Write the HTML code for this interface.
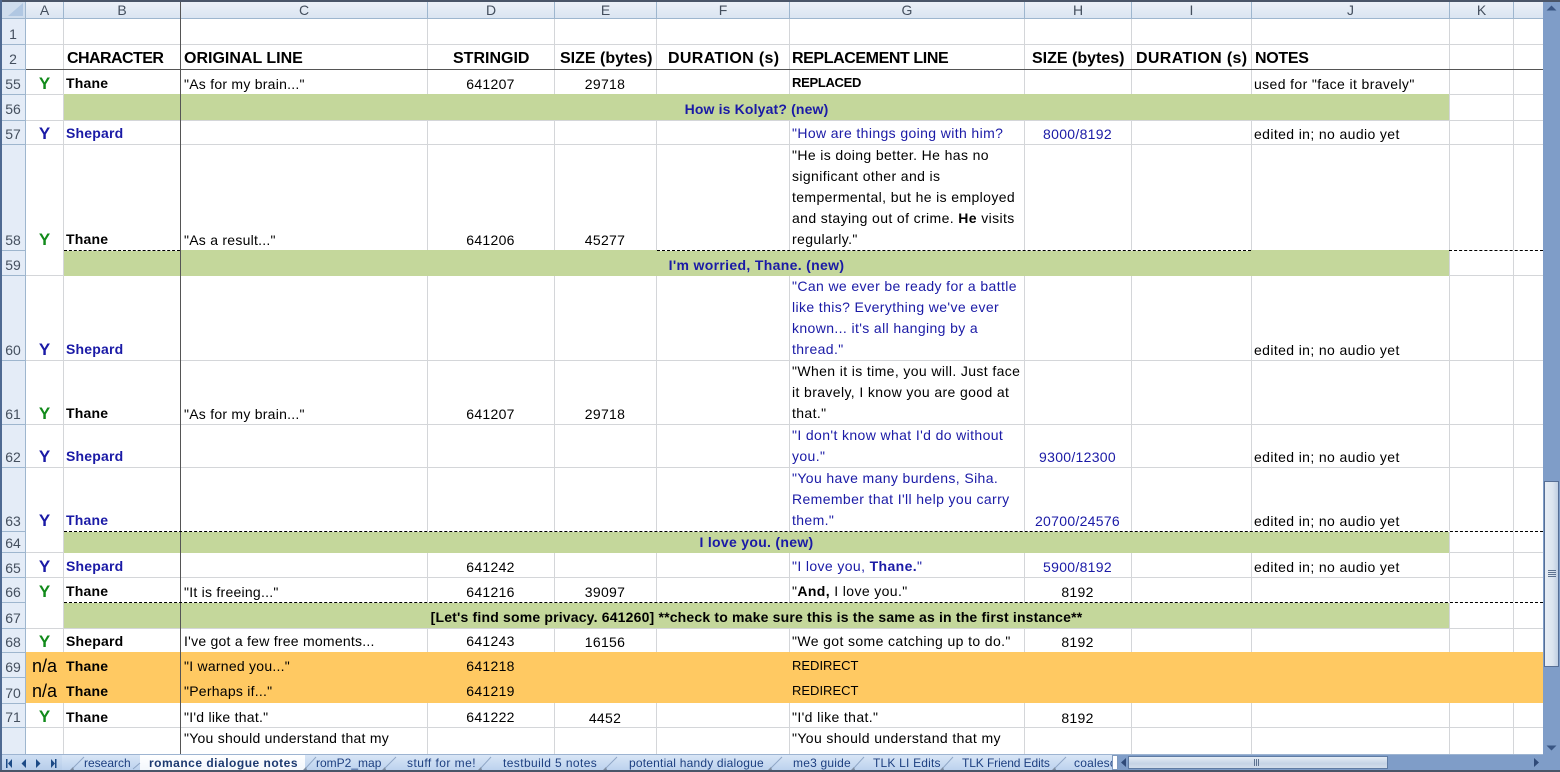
<!DOCTYPE html>
<html><head><meta charset="utf-8"><style>
html,body{margin:0;padding:0;background:#fff}
#w{position:relative;width:1560px;height:772px;overflow:hidden;background:#fff;font:14px/20px "Liberation Sans",sans-serif;color:#000}
#w div{position:absolute}
.t{white-space:nowrap;letter-spacing:.38px}
.g{left:792px}.c{left:184px;letter-spacing:.25px}.j{left:1254px}.b{left:66px;font-weight:bold;letter-spacing:.2px}
.d{left:427px;width:127px;text-align:center;letter-spacing:.3px}.e{left:554px;width:102px;text-align:center;letter-spacing:.3px}.h{left:1024px;width:107px;text-align:center;letter-spacing:.3px}
.bl{color:#1a1aa6}
.y{left:26px;width:37px;text-align:center;font-weight:bold;font-size:17px}
.gr{color:#118a1a}.yb{color:#1a1aa6}
.r{left:0;width:26px;text-align:center;color:#444f5e;font-size:14px}
.ch{top:0;height:19px;line-height:20px;text-align:center;color:#444f5e;font-size:14px}
.hd{top:49px;font-weight:bold;font-size:16px;white-space:nowrap}
.tab{top:754px;font-size:12px;color:#1d3f80;white-space:nowrap;line-height:18px;letter-spacing:.2px}
.v{top:19px;height:736px;width:1px;background:#d4d6d9}
.l{left:26px;width:1517px;height:1px;background:#d4d6d9}
.dash{height:0;border-top:1px dashed #000;background:#fff}
.grn{left:64px;width:1385px;background:#c4d79b}
.sec{left:64px;width:1385px;text-align:center;font-weight:bold}
.vh{top:2px;height:17px;width:1px;background:#9eb6ce}
.hh{left:0;width:26px;height:1px;background:#9eb6ce}
</style></head><body><div id="w">

<!-- header backgrounds -->
<div style="left:0;top:0;width:1543px;height:19px;background:linear-gradient(#eef2f8,#d9e4f1)"></div>
<div style="left:0;top:19px;width:26px;height:736px;background:#e4ecf7"></div>
<div style="left:0;top:18px;width:1543px;height:1px;background:#9eb6ce"></div>
<div style="left:25px;top:0;width:1px;height:755px;background:#9eb6ce"></div>
<div style="left:2px;top:2px;width:23px;height:16px;background:#cfdded"></div>
<div style="left:8px;top:3px;width:0;height:0;border-left:15px solid transparent;border-bottom:13px solid #b0c7e2"></div>

<!-- vertical grid -->
<div class="v" style="left:63px"></div><div class="v" style="left:427px"></div><div class="v" style="left:554px"></div><div class="v" style="left:656px"></div><div class="v" style="left:789px"></div><div class="v" style="left:1024px"></div><div class="v" style="left:1131px"></div><div class="v" style="left:1251px"></div><div class="v" style="left:1449px"></div><div class="v" style="left:1513px"></div>
<!-- horizontal grid -->
<div class="l" style="top:44px"></div><div class="l" style="top:94px"></div><div class="l" style="top:120px"></div><div class="l" style="top:144px"></div><div class="l" style="top:275px"></div><div class="l" style="top:360px"></div><div class="l" style="top:424px"></div><div class="l" style="top:467px"></div><div class="l" style="top:552px"></div><div class="l" style="top:577px"></div><div class="l" style="top:628px"></div><div class="l" style="top:727px"></div>

<!-- header separators -->
<div class="vh" style="left:63px"></div><div class="vh" style="left:427px"></div><div class="vh" style="left:554px"></div><div class="vh" style="left:656px"></div><div class="vh" style="left:789px"></div><div class="vh" style="left:1024px"></div><div class="vh" style="left:1131px"></div><div class="vh" style="left:1251px"></div><div class="vh" style="left:1449px"></div><div class="vh" style="left:1513px"></div>
<div class="hh" style="top:44px"></div><div class="hh" style="top:69px"></div><div class="hh" style="top:94px"></div><div class="hh" style="top:120px"></div><div class="hh" style="top:144px"></div><div class="hh" style="top:250px"></div><div class="hh" style="top:275px"></div><div class="hh" style="top:360px"></div><div class="hh" style="top:424px"></div><div class="hh" style="top:467px"></div><div class="hh" style="top:531px"></div><div class="hh" style="top:552px"></div><div class="hh" style="top:577px"></div><div class="hh" style="top:602px"></div><div class="hh" style="top:628px"></div><div class="hh" style="top:652px"></div><div class="hh" style="top:677px"></div><div class="hh" style="top:703px"></div><div class="hh" style="top:727px"></div>

<!-- fills -->
<div class="grn" style="top:94px;height:26px"></div>
<div class="grn" style="top:250px;height:26px"></div>
<div class="grn" style="top:532px;height:21px"></div>
<div class="grn" style="top:603px;height:25px"></div>
<div style="left:26px;top:652px;width:1517px;height:51px;background:#ffc962"></div>

<!-- strong lines -->
<div style="left:26px;top:69px;width:1517px;height:1px;background:#555"></div>
<div style="left:180px;top:0;width:1px;height:755px;background:#555"></div>
<div class="dash" style="left:64px;top:250px;width:116px"></div>
<div class="dash" style="left:657px;top:250px;width:594px"></div>
<div class="dash" style="left:1449px;top:250px;width:94px"></div>
<div class="dash" style="left:64px;top:531px;width:1479px"></div>
<div class="dash" style="left:64px;top:602px;width:1479px"></div>

<!-- column letters -->
<div class="ch" style="left:26px;width:37px">A</div><div class="ch" style="left:64px;width:116px">B</div><div class="ch" style="left:181px;width:246px">C</div><div class="ch" style="left:428px;width:126px">D</div><div class="ch" style="left:555px;width:101px">E</div><div class="ch" style="left:657px;width:132px">F</div><div class="ch" style="left:790px;width:234px">G</div><div class="ch" style="left:1025px;width:106px">H</div><div class="ch" style="left:1132px;width:119px">I</div><div class="ch" style="left:1252px;width:197px">J</div><div class="ch" style="left:1450px;width:63px">K</div>

<!-- row numbers -->
<div class="r" style="top:24px">1</div><div class="r" style="top:49px">2</div><div class="r" style="top:74px">55</div><div class="r" style="top:99px">56</div><div class="r" style="top:124px">57</div><div class="r" style="top:230px">58</div><div class="r" style="top:255px">59</div><div class="r" style="top:340px">60</div><div class="r" style="top:404px">61</div><div class="r" style="top:447px">62</div><div class="r" style="top:511px">63</div><div class="r" style="top:533px">64</div><div class="r" style="top:558px">65</div><div class="r" style="top:582px">66</div><div class="r" style="top:608px">67</div><div class="r" style="top:632px">68</div><div class="r" style="top:657px">69</div><div class="r" style="top:683px">70</div><div class="r" style="top:707px">71</div>

<!-- column titles -->
<div class="hd" style="left:67px;letter-spacing:-.55px">CHARACTER</div>
<div class="hd" style="left:184px">ORIGINAL LINE</div>
<div class="hd" style="left:453px">STRINGID</div>
<div class="hd" style="left:560px">SIZE (bytes)</div>
<div class="hd" style="left:668px;letter-spacing:.35px">DURATION (s)</div>
<div class="hd" style="left:792px;letter-spacing:-.4px">REPLACEMENT LINE</div>
<div class="hd" style="left:1032px">SIZE (bytes)</div>
<div class="hd" style="left:1136px;letter-spacing:.35px">DURATION (s)</div>
<div class="hd" style="left:1255px;letter-spacing:-.3px">NOTES</div>

<!-- Y marks -->
<div class="y gr" style="top:74px">Y</div><div class="y yb" style="top:124px">Y</div><div class="y gr" style="top:230px">Y</div><div class="y yb" style="top:340px">Y</div><div class="y gr" style="top:404px">Y</div><div class="y yb" style="top:447px">Y</div><div class="y yb" style="top:511px">Y</div><div class="y yb" style="top:557px">Y</div><div class="y gr" style="top:582px">Y</div><div class="y gr" style="top:632px">Y</div>
<div class="y" style="top:656px;font-weight:normal;font-size:18px">n/a</div><div class="y" style="top:681px;font-weight:normal;font-size:18px">n/a</div><div class="y gr" style="top:707px">Y</div>

<!-- B -->
<div class="t b" style="top:73px">Thane</div>
<div class="t b bl" style="top:123px">Shepard</div>
<div class="t b" style="top:229px">Thane</div>
<div class="t b bl" style="top:339px">Shepard</div>
<div class="t b" style="top:403px">Thane</div>
<div class="t b bl" style="top:446px">Shepard</div>
<div class="t b bl" style="top:510px">Thane</div>
<div class="t b bl" style="top:556px">Shepard</div>
<div class="t b" style="top:581px">Thane</div>
<div class="t b" style="top:631px">Shepard</div>
<div class="t b" style="top:656px">Thane</div>
<div class="t b" style="top:681px">Thane</div>
<div class="t b" style="top:707px">Thane</div>

<!-- C -->
<div class="t c" style="top:74px">"As for my brain..."</div>
<div class="t c" style="top:230px">"As a result..."</div>
<div class="t c" style="top:404px">"As for my brain..."</div>
<div class="t c" style="top:582px">"It is freeing..."</div>
<div class="t c" style="top:631px">I've got a few free moments...</div>
<div class="t c" style="top:656px">"I warned you..."</div>
<div class="t c" style="top:681px">"Perhaps if..."</div>
<div class="t c" style="top:707px">"I'd like that."</div>
<div class="t c" style="top:728px">"You should understand that my</div>

<!-- D -->
<div class="t d" style="top:74px">641207</div><div class="t d" style="top:230px">641206</div><div class="t d" style="top:404px">641207</div><div class="t d" style="top:557px">641242</div><div class="t d" style="top:582px">641216</div><div class="t d" style="top:631px">641243</div><div class="t d" style="top:656px">641218</div><div class="t d" style="top:681px">641219</div><div class="t d" style="top:707px">641222</div>

<!-- E -->
<div class="t e" style="top:74px">29718</div><div class="t e" style="top:230px">45277</div><div class="t e" style="top:404px">29718</div><div class="t e" style="top:582px">39097</div><div class="t e" style="top:632px">16156</div><div class="t e" style="top:708px">4452</div>

<!-- G -->
<div class="t g" style="top:73px;font-weight:bold;font-size:13px;letter-spacing:-.3px">REPLACED</div>
<div class="t g bl" style="top:123px">"How are things going with him?</div>
<div class="t g" style="top:145px">"He is doing better. He has no</div>
<div class="t g" style="top:166px">significant other and is</div>
<div class="t g" style="top:187px">tempermental, but he is employed</div>
<div class="t g" style="top:208px">and staying out of crime. <b>He</b> visits</div>
<div class="t g" style="top:229px">regularly."</div>
<div class="t g bl" style="top:276px">"Can we ever be ready for a battle</div>
<div class="t g bl" style="top:297px">like this? Everything we've ever</div>
<div class="t g bl" style="top:318px">known... it's all hanging by a</div>
<div class="t g bl" style="top:339px">thread."</div>
<div class="t g" style="top:361px">"When it is time, you will. Just face</div>
<div class="t g" style="top:382px">it bravely, I know you are good at</div>
<div class="t g" style="top:403px">that."</div>
<div class="t g bl" style="top:425px">"I don't know what I'd do without</div>
<div class="t g bl" style="top:446px">you."</div>
<div class="t g bl" style="top:468px">"You have many burdens, Siha.</div>
<div class="t g bl" style="top:489px">Remember that I'll help you carry</div>
<div class="t g bl" style="top:510px">them."</div>
<div class="t g bl" style="top:556px">"I love you, <b>Thane.</b>"</div>
<div class="t g" style="top:581px">"<b>And,</b> I love you."</div>
<div class="t g" style="top:631px">"We got some catching up to do."</div>
<div class="t g" style="top:656px;font-size:13px;letter-spacing:0">REDIRECT</div>
<div class="t g" style="top:681px;font-size:13px;letter-spacing:0">REDIRECT</div>
<div class="t g" style="top:707px">"I'd like that."</div>
<div class="t g" style="top:728px">"You should understand that my</div>

<!-- H -->
<div class="t h bl" style="top:124px">8000/8192</div>
<div class="t h bl" style="top:447px">9300/12300</div>
<div class="t h bl" style="top:511px">20700/24576</div>
<div class="t h bl" style="top:557px">5900/8192</div>
<div class="t h" style="top:582px">8192</div>
<div class="t h" style="top:632px">8192</div>
<div class="t h" style="top:708px">8192</div>

<!-- J -->
<div class="t j" style="top:74px">used for "face it bravely"</div>
<div class="t j" style="top:124px">edited in; no audio yet</div>
<div class="t j" style="top:340px">edited in; no audio yet</div>
<div class="t j" style="top:447px">edited in; no audio yet</div>
<div class="t j" style="top:511px">edited in; no audio yet</div>
<div class="t j" style="top:557px">edited in; no audio yet</div>

<!-- section rows -->
<div class="t sec bl" style="top:99px;letter-spacing:.15px">How is Kolyat? (new)</div>
<div class="t sec bl" style="top:255px;letter-spacing:.33px">I'm worried, Thane. (new)</div>
<div class="t sec bl" style="top:532px;letter-spacing:.3px">I love you. (new)</div>
<div class="t sec" style="top:607px;font-size:14px;letter-spacing:.18px">[Let's find some privacy. 641260] **check to make sure this is the same as in the first instance**</div>

<!-- tab bar -->
<div style="left:0;top:755px;width:1112px;height:15px;background:linear-gradient(#d9e6f6,#bcd2ee)"></div>
<div style="left:0;top:754px;width:1543px;height:1px;background:#9db4d1"></div>
<div style="left:0;top:755px;width:62px;height:15px;background:linear-gradient(#cfdff3,#b7cdea)"></div>
<div style="left:140px;top:755px;width:165px;height:15px;background:linear-gradient(#fff,#f3f7fc)"></div>
<div class="tab" style="left:84px;letter-spacing:0">research</div>
<div class="tab" style="left:149px;font-weight:bold;color:#1d3a70;letter-spacing:.5px">romance dialogue notes</div>
<div class="tab" style="left:316px;letter-spacing:0">romP2_map</div>
<div class="tab" style="left:407px;letter-spacing:.45px">stuff for me!</div>
<div class="tab" style="left:503px;letter-spacing:.4px">testbuild 5 notes</div>
<div class="tab" style="left:629px">potential handy dialogue</div>
<div class="tab" style="left:793px">me3 guide</div>
<div class="tab" style="left:873px">TLK LI Edits</div>
<div class="tab" style="left:962px;letter-spacing:-.1px">TLK Friend Edits</div>
<div style="left:1060px;top:754px;width:52px;height:16px;overflow:hidden"><div class="tab" style="left:14px;top:0">coalesce</div></div>
<svg style="position:absolute;left:0;top:754px" width="1130" height="18" fill="none" stroke="#8fa6c6" stroke-width="1">
<path d="M72 15L84 3M133 15L140 9M305 15L316 3M384 15L396 3M480 15L491 3M605 15L617 3M770 15L782 3M853 15L864 3M942 15L953 3M1054 15L1066 3"/>
<g fill="#7f8ea3" stroke="none"><path d="M70 16l3-3 1 3zM303 16l3-3 1 3zM382 16l3-3 1 3zM478 16l3-3 1 3zM603 16l3-3 1 3zM768 16l3-3 1 3zM851 16l3-3 1 3zM940 16l3-3 1 3zM1052 16l3-3 1 3z"/></g>
<g fill="#1c4a86" stroke="none"><path d="M6 5h1.500v9H6zM12 5v9l-4-4.500zM26 5v9l-4.500-4.500zM36 5v9l4.500-4.500zM51 5v9l4-4.500zM55 5h1.500v9H55z"/></g>
</svg>
<div style="left:1112px;top:755px;width:6px;height:15px;background:#fff;border:1px solid #7f99bd;box-sizing:border-box"></div>

<!-- horizontal scrollbar -->
<div style="left:1118px;top:755px;width:425px;height:15px;background:#7f9dc8"></div>
<div style="left:1128px;top:756px;width:260px;height:13px;background:linear-gradient(#e6edf5,#c5d3e5 60%,#d3deeb);border:1px solid #5f7ba3;box-sizing:border-box"></div>
<div style="left:1254px;top:759px;width:6px;height:7px;background:repeating-linear-gradient(90deg,#5d7290 0 1px,transparent 1px 2px)"></div>
<svg style="position:absolute;left:1118px;top:755px" width="425" height="15"><path d="M3 7.500L8 3v9zM421 7.500L416 3v9z" fill="#2f4a78"/></svg>

<!-- vertical scrollbar -->
<div style="left:1543px;top:0;width:17px;height:772px;background:#7f9dc8"></div>
<div style="left:1544px;top:481px;width:15px;height:186px;background:linear-gradient(90deg,#e6edf5,#dbe4ef 60%,#c0cfe2);border:1px solid #566f96;box-sizing:border-box"></div>
<div style="left:1548px;top:570px;width:8px;height:7px;background:repeating-linear-gradient(#5d7290 0 1px,transparent 1px 2px)"></div>
<svg style="position:absolute;left:1543px;top:0" width="17" height="772"><path d="M3.500 10.500L8.500 5.500l5 5zM3.500 745.500l5 5 5-5z" fill="#3a5684"/></svg>

<!-- window edges -->
<div style="left:0;top:0;width:1560px;height:2px;background:#4a5568"></div>
<div style="left:0;top:0;width:2px;height:772px;background:#4f6a92"></div>
<div style="left:0;top:770px;width:1560px;height:2px;background:#4a5568"></div>
</div></body></html>
